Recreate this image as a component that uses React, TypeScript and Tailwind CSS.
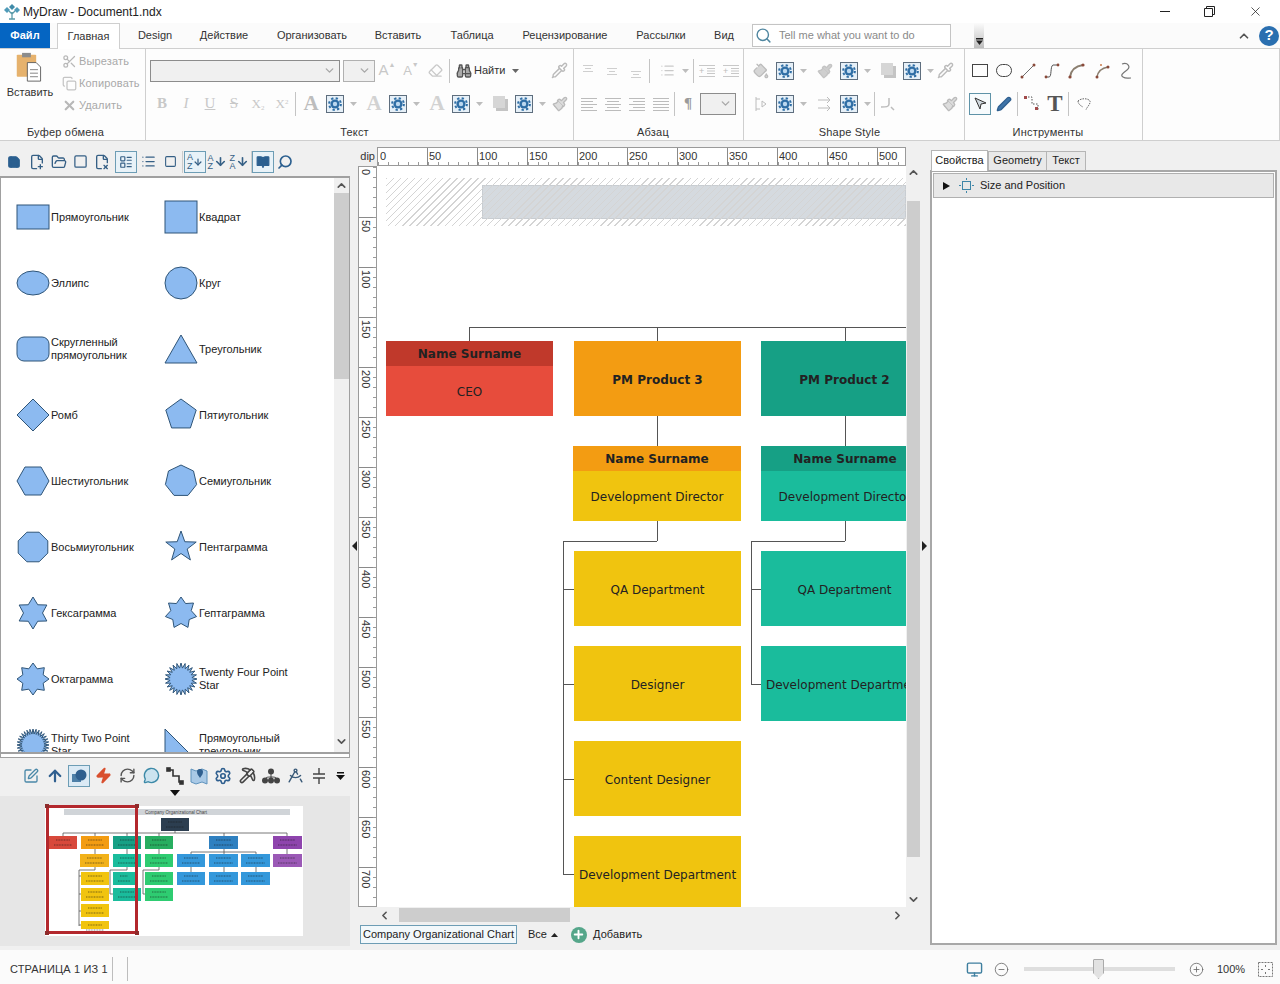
import React from 'react';
import {
  Scissors, Copy, X, Binoculars, Pipette, Paintbrush, PaintBucket, ChevronDown, ChevronUp, ChevronLeft, ChevronRight,
  Search, FilePlus2, FolderOpen, FileX2, LayoutList, List, Square, BookOpen, SquarePen, ArrowUp, Zap, RefreshCw, MessageCircle,
  Settings, Pickaxe, DraftingCompass, Monitor, CircleMinus, CirclePlus, Pen, Eraser, Save, ArrowDown, Plus,
} from 'lucide-react';

const D = '#c9c9c9';

function Cell({ className = 'w-[24px]', children }: { className?: string; children?: React.ReactNode }) {
  return <div className={`${className} h-[24px] flex items-center justify-center shrink-0`}>{children}</div>;
}
function Sep({ className = 'mx-[1px]' }: { className?: string }) {
  return <div className={`w-px h-[24px] bg-[#c4c4c4] shrink-0 ${className}`} />;
}
function Gear() {
  return (
    <Cell>
      <div className="w-[18px] h-[18px] border border-[#5e6e7e] bg-[#e6f0f8] flex items-center justify-center">
        <svg width="14" height="14" viewBox="0 0 14 14">
          <circle cx="7" cy="7" r="5.9" fill="none" stroke="#2f6ea5" strokeWidth="2" strokeDasharray="2.3 2.33" />
          <circle cx="7" cy="7" r="4.6" fill="#2f6ea5" />
          <circle cx="7" cy="7" r="2.2" fill="#bcd8ef" />
        </svg>
      </div>
    </Cell>
  );
}
function Caret() {
  return (
    <Cell className="w-[12px]">
      <svg width="7" height="4"><path d="M0 0h7L3.5 4z" fill="#bdbdbd" /></svg>
    </Cell>
  );
}
function Chev() {
  return <ChevronDown size={13} stroke="#a8a8a8" strokeWidth={2.5} />;
}
function Txt({ c, children }: { c: string; children: React.ReactNode }) {
  return <span className={c}>{children}</span>;
}
function Lines({ kind }: { kind: string }) {
  const l: Record<string, number[][]> = {
    left: [[2, 16], [2, 12], [2, 16], [2, 12], [2, 16]],
    center: [[2, 16], [4, 12], [2, 16], [4, 12], [2, 16]],
    right: [[2, 16], [6, 12], [2, 16], [6, 12], [2, 16]],
    just: [[2, 16], [2, 16], [2, 16], [2, 16], [2, 16]],
  };
  return (
    <Cell>
      <svg width="18" height="14">
        {l[kind].map(([x, w], i) => (
          <rect key={i} x={x - 1} y={1 + i * 3} width={w} height="1" fill="#bcbcbc" />
        ))}
      </svg>
    </Cell>
  );
}
function ParaTop({ y }: { y: number }) {
  return (
    <Cell>
      <svg width="14" height="14">
        <rect x="1" y={y} width="10" height="1" fill="#cfcfcf" />
        <rect x="3" y={y + 3} width="6" height="1" fill="#cfcfcf" />
        <rect x="1" y={y + 6} width="10" height="1" fill="#cfcfcf" />
      </svg>
    </Cell>
  );
}
function Indent({ sign }: { sign: string }) {
  return (
    <Cell>
      <svg width="16" height="14">
        <rect x="0" y="1" width="16" height="1" fill="#c8c8c8" />
        <rect x="0" y="12" width="16" height="1" fill="#c8c8c8" />
        <rect x="8" y="4" width="8" height="1" fill="#c8c8c8" />
        <rect x="8" y="6.5" width="8" height="1" fill="#c8c8c8" />
        <rect x="8" y="9" width="8" height="1" fill="#c8c8c8" />
        <text x="0" y="10" fontSize="9" fill="#bcbcbc">{sign}</text>
      </svg>
    </Cell>
  );
}
function Shadow() {
  return (
    <Cell>
      <svg width="17" height="17">
        <rect x="4" y="4" width="12" height="12" fill="#c4c4c4" />
        <rect x="1" y="1" width="12" height="12" fill="#d6d6d6" />
      </svg>
    </Cell>
  );
}
function BigA({ outline }: { outline?: boolean }) {
  return (
    <Cell>
      <span className={outline ? "text-[21px] font-bold font-['Liberation_Serif',serif] leading-none text-[#d2d2d2]" : "text-[21px] font-bold font-['Liberation_Serif',serif] leading-none text-[#bdbdbd]"}>A</span>
    </Cell>
  );
}
function Group({ className, label, row1, row2 }: { className: string; label: string; row1: React.ReactNode; row2: React.ReactNode }) {
  return (
    <div className={`${className} shrink-0 h-full border-r border-[#cfcfcf] flex flex-col`}>
      <div className="h-[10px]" />
      <div className="h-[24px] flex items-center">{row1}</div>
      <div className="h-[9px]" />
      <div className="h-[24px] flex items-center">{row2}</div>
      <div className="flex-1 flex items-center justify-center text-[11px] text-[#333] pt-[8px] pr-[14px] tracking-[0.2px]">{label}</div>
    </div>
  );
}

function ClipBoardIcon() {
  return (
    <svg width="30" height="30" viewBox="0 0 34 34">
      <rect x="2" y="3" width="22" height="25" rx="1" fill="#e6b26d" />
      <rect x="8" y="1" width="10" height="5" fill="#8c8c8c" />
      <path d="M14 12h10l5 5v16H14z" fill="#fff" stroke="#555" />
      <path d="M17 20h9M17 24h9M17 28h9" stroke="#777" />
    </svg>
  );
}

function Ribbon() {
  return (
    <div className="h-[93px] flex border-y border-[#cfcfcf] bg-[#fdfdfd] border-r">
      <div className="w-[146px] shrink-0 h-full border-r border-[#cfcfcf] flex flex-col">
        <div className="h-[78px] flex">
          <div className="w-[60px] flex flex-col items-center pt-[3px]">
            <ClipBoardIcon />
            <div className="text-[11px] text-[#333] mt-[2px]">Вставить</div>
          </div>
          <div className="flex flex-col text-[11px] text-[#a9a9a9] pt-[1px] ml-[2px] tracking-[0.15px]">
            <div className="h-[22px] flex items-center gap-[2px]"><Scissors size={15} stroke="#b8b8b8" />Вырезать</div>
            <div className="h-[22px] flex items-center gap-[2px]"><Copy size={15} stroke="#c4c4c4" />Копировать</div>
            <div className="h-[22px] flex items-center gap-[2px]"><X size={15} stroke="#b8b8b8" strokeWidth={3.5} />Удалить</div>
          </div>
        </div>
        <div className="flex-1 flex items-center justify-center text-[11px] text-[#333] pr-[14px] tracking-[0.2px]">Буфер обмена</div>
      </div>

      <Group
        className="w-[428px] pl-[4px]"
        label="Текст"
        row1={
          <>
            <div className="w-[190px] h-[22px] border border-[#8c8c8c] bg-[#f0f0f0] flex items-center justify-end pr-[3px]"><Chev /></div>
            <div className="w-[32px] h-[22px] ml-[3px] border border-[#b0b0b0] bg-[#f0f0f0] flex items-center justify-end pr-[3px]"><Chev /></div>
            <Cell><span className="text-[15px] text-[#c8c8c8]">A</span><span className="text-[7px] text-[#c8c8c8] -mt-[10px]">▲</span></Cell>
            <Cell><span className="text-[13px] text-[#c8c8c8]">A</span><span className="text-[7px] text-[#c8c8c8] -mt-[10px]">▼</span></Cell>
            <Cell className="w-[25px]"><Eraser size={15} stroke={D} /></Cell>
            <Sep />
            <div className="w-[98px] flex items-center text-[11px] text-[#333] pl-[5px] shrink-0">
              <Binoculars size={16} stroke="#555" fill="#aaa" />
              <span className="ml-[2px]">Найти</span>
              <svg className="ml-[7px]" width="7" height="4"><path d="M0 0h7L3.5 4z" fill="#666" /></svg>
            </div>
            <Cell className="w-[20px]"><Pipette size={17} stroke="#bbb" /></Cell>
          </>
        }
        row2={
          <>
            <Cell><Txt c="font-['Liberation_Serif',serif] font-bold text-[15px] text-[#c8c8c8]">B</Txt></Cell>
            <Cell><Txt c="font-['Liberation_Serif',serif] italic text-[15px] text-[#c8c8c8]">I</Txt></Cell>
            <Cell><Txt c="font-['Liberation_Serif',serif] underline text-[15px] text-[#c8c8c8]">U</Txt></Cell>
            <Cell><Txt c="font-['Liberation_Serif',serif] line-through text-[15px] text-[#c8c8c8]">S</Txt></Cell>
            <Cell><Txt c="font-['Liberation_Serif',serif] text-[13px] text-[#c8c8c8]">X<sub className="text-[7px]">2</sub></Txt></Cell>
            <Cell><Txt c="font-['Liberation_Serif',serif] text-[13px] text-[#c8c8c8]">X<sup className="text-[7px]">2</sup></Txt></Cell>
            <Sep className="mx-[1px]" />
            <div className="w-[2px]" />
            <BigA /><Gear /><Caret />
            <div className="w-[3px]" />
            <BigA outline /><Gear /><Caret />
            <div className="w-[3px]" />
            <BigA outline /><Gear /><Caret />
            <div className="w-[3px]" />
            <Shadow /><Gear /><Caret />
            <Cell><Paintbrush size={16} stroke="#bbb" fill="#ddd" /></Cell>
          </>
        }
      />

      <Group
        className="w-[170px] pl-[3px]"
        label="Абзац"
        row1={
          <>
            <ParaTop y={1} /><ParaTop y={4} /><ParaTop y={7} />
            <Sep className="ml-[0px]" />
            <div className="w-[5px]" />
            <Cell><List size={15} stroke={D} /></Cell>
            <Caret />
            <Sep className="ml-[2px]" />
            <div className="w-[1px]" />
            <Indent sign="+" /><Indent sign="+" />
          </>
        }
        row2={
          <>
            <Lines kind="left" /><Lines kind="center" /><Lines kind="right" /><Lines kind="just" />
            <Sep className="mx-[1px]" />
            <Cell className="w-[24px]"><span className="text-[15px] font-bold text-[#9a9a9a] font-['Liberation_Serif',serif]">¶</span></Cell>
            <div className="w-[36px] h-[22px] border border-[#8c8c8c] bg-[#f0f0f0] flex items-center justify-end pr-[3px]"><Chev /></div>
          </>
        }
      />

      <Group
        className="w-[221px] pl-[5px]"
        label="Shape Style"
        row1={
          <>
            <Cell><PaintBucket size={16} stroke="#bcbcbc" fill="#d6d6d6" /></Cell><Gear /><Caret />
            <div className="w-[4px]" />
            <Cell><Paintbrush size={16} stroke="#c4c4c4" fill="#cfcfcf" /></Cell><Gear /><Caret />
            <div className="w-[3px]" />
            <Shadow /><Gear /><Caret />
            <Cell className="w-[18px]"><Pipette size={17} stroke="#bbb" /></Cell>
          </>
        }
        row2={
          <>
            <Cell>
              <svg width="16" height="16" fill="none" stroke="#bcbcbc"><path d="M3 1v14M3 3h4M3 13h4M9 5l4 3-4 3z" /></svg>
            </Cell>
            <Gear /><Caret />
            <div className="w-[4px]" />
            <Cell>
              <svg width="16" height="16" fill="none" stroke="#bcbcbc"><path d="M1 4h12M10 1l3 3-3 3M1 12h12M10 9l3 3-3 3" /></svg>
            </Cell>
            <Gear /><Caret />
            <Sep className="mx-[1px]" />
            <Cell>
              <svg width="16" height="16" fill="none" stroke="#bcbcbc" strokeWidth="1.5"><path d="M9 2v6c0 3-3 3-8 3" /><path d="M11 11l3 3" /></svg>
            </Cell>
            <div className="w-[38px]" />
            <Cell><Paintbrush size={16} stroke="#bbb" fill="#ddd" /></Cell>
          </>
        }
      />

      <Group
        className="w-[178px] pl-[3px]"
        label="Инструменты"
        row1={
          <>
            <Cell><div className="w-[16px] h-[13px] border border-[#444]" /></Cell>
            <Cell><div className="w-[16px] h-[13px] border border-[#444] rounded-full" /></Cell>
            <Cell><svg width="16" height="16" fill="none"><path d="M2 14L14 2" stroke="#6d6d6d" /><circle cx="2" cy="14" r="1.5" fill="#8a4a3a" /><circle cx="14" cy="2" r="1.5" fill="#8a4a3a" /></svg></Cell>
            <Cell><svg width="16" height="16" fill="none"><path d="M2 14h3c3 0 1-11 4-12h4" stroke="#555" /><circle cx="2" cy="14" r="1.4" fill="#8a4a3a" /><circle cx="14" cy="2" r="1.4" fill="#8a4a3a" /></svg></Cell>
            <Cell className="w-[25px]"><svg width="18" height="16" fill="none"><path d="M2 14C3 7 8 3 15 2" stroke="#8b7f70" strokeWidth="2" /><circle cx="2" cy="14" r="1.6" fill="#8a4a3a" /><circle cx="15" cy="2" r="1.6" fill="#8a4a3a" /></svg></Cell>
            <Cell className="w-[25px]"><svg width="18" height="16" fill="none"><path d="M4 14C5 8 9 5 15 4" stroke="#8b7f70" strokeWidth="1.5" /><circle cx="4" cy="14" r="1.5" fill="#8a4a3a" /><circle cx="15" cy="4" r="1.5" fill="#8a4a3a" /><circle cx="8" cy="2" r="1" fill="#c87a4a" /></svg></Cell>
            <Cell><svg width="14" height="18" fill="none"><path d="M3 2c6-2 9 3 5 6S1 13 4 15s5 1 8 1" stroke="#777" strokeWidth="1.2" /></svg></Cell>
          </>
        }
        row2={
          <>
            <Cell>
              <div className="w-[22px] h-[22px] border border-[#5f93a8] bg-[#f7fbfd] flex items-center justify-center">
                <svg width="15" height="15"><path d="M2 2l11 5-5 1-1 5z" fill="#cfd8de" stroke="#333" /></svg>
              </div>
            </Cell>
            <Cell><Pen size={16} fill="#3f74a8" stroke="#2f5f8f" /></Cell>
            <Sep className="mx-[1px]" />
            <Cell><svg width="17" height="17" fill="none"><path d="M2 2h7v7h6v6" stroke="#555" strokeDasharray="1.5 1.5" /><rect x="1" y="1" width="3" height="3" fill="#a14a4a" /><rect x="12" y="12" width="3" height="3" fill="#a14a4a" /></svg></Cell>
            <Cell><span className="font-['Liberation_Serif',serif] font-bold text-[23px] text-[#555] leading-none">T</span></Cell>
            <Sep className="mx-[1px]" />
            <Cell className="w-[28px]"><svg width="16" height="14" fill="none"><path d="M2 4c3-3 10-3 12 0 1 3-4 7-4 9M2 4c0 3 3 5 5 6" stroke="#666" strokeDasharray="1.5 1" /></svg></Cell>
          </>
        }
      />
      <div className="flex-1" />
    </div>
  );
}

function Ngon({ n, rot = -90, r = 16 }: { n: number; rot?: number; r?: number }) {
  const pts = Array.from({ length: n }, (_, i) => {
    const a = ((rot + (i * 360) / n) * Math.PI) / 180;
    return `${17 + r * Math.cos(a)},${17 + r * Math.sin(a)}`;
  }).join(' ');
  return <polygon points={pts} />;
}
function Star({ n, inner }: { n: number; inner: number }) {
  const pts = Array.from({ length: n * 2 }, (_, i) => {
    const a = ((-90 + (i * 180) / n) * Math.PI) / 180;
    const r = i % 2 ? inner : 16;
    return `${17 + r * Math.cos(a)},${17 + r * Math.sin(a)}`;
  }).join(' ');
  return <polygon points={pts} />;
}

const shapes: [string, React.ReactNode][] = [
  ['Прямоугольник', <rect x="1" y="5" width="32" height="24" />],
  ['Квадрат', <rect x="1" y="1" width="32" height="32" />],
  ['Эллипс', <ellipse cx="17" cy="17" rx="16" ry="12" />],
  ['Круг', <circle cx="17" cy="17" r="16" />],
  ['Скругленный прямоугольник', <rect x="1" y="5" width="32" height="24" rx="7" />],
  ['Треугольник', <polygon points="17,3 33,31 1,31" />],
  ['Ромб', <polygon points="17,1 33,17 17,33 1,17" />],
  ['Пятиугольник', <Ngon n={5} />],
  ['Шестиугольник', <polygon points="9,3 25,3 33,17 25,31 9,31 1,17" />],
  ['Семиугольник', <Ngon n={7} />],
  ['Восьмиугольник', <Ngon n={8} rot={-67.5} />],
  ['Пентаграмма', <Star n={5} inner={6.5} />],
  ['Гексаграмма', <Star n={6} inner={9.5} />],
  ['Гептаграмма', <Star n={7} inner={10.5} />],
  ['Октаграмма', <Star n={8} inner={11} />],
  ['Twenty Four Point Star', <Star n={24} inner={11} />],
  ['Thirty Two Point Star', <Star n={32} inner={11} />],
  ['Прямоугольный треугольник', <polygon points="1,1 33,33 1,33" />],
];

function ShapeList() {
  return (
    <div className="h-[578px] flex bg-white border-x border-y-2 border-[#a0a0a0] overflow-hidden shrink-0">
      <div className="flex-1 pl-[15px] pt-[6px] overflow-hidden">
        <div className="grid grid-cols-[148px_148px]">
          {shapes.map(([name, el]) => (
            <div key={name} className="h-[66px] flex items-center gap-[1px]">
              <svg width="34" height="34" viewBox="0 0 34 34" fill="#8cbaf0" stroke="#2f5578" strokeWidth="1" className="shrink-0">
                {el}
              </svg>
              <div className="text-[11px] leading-[13px] text-[#222] w-[100px]">{name}</div>
            </div>
          ))}
        </div>
      </div>
      <div className="w-[15px] bg-[#f0f0f0] flex flex-col items-center justify-between shrink-0">
        <div className="flex flex-col items-center w-full">
          <ChevronUp size={13} stroke="#555" strokeWidth={3} className="my-[1px]" />
          <div className="w-full h-[186px] bg-[#cdcdcd]" />
        </div>
        <ChevronDown size={13} stroke="#555" strokeWidth={3} className="mb-[4px]" />
      </div>
    </div>
  );
}

function TopToolbar() {
  const T = 'w-[22px] flex items-center justify-center text-[9px] leading-[8px] text-[#355f85]';
  return (
    <div className="h-[29px] flex items-center pl-[5px] shrink-0">
      <div className="w-[18px] flex justify-center"><Save size={14} stroke="#2b5f8f" fill="#2b5f8f" /></div>
      <div className="w-[3px]" />
      <div className="w-[22px] flex justify-center"><FilePlus2 size={16} stroke="#355f85" /></div>
      <div className="w-[21px] flex justify-center"><FolderOpen size={16} stroke="#355f85" /></div>
      <div className="w-[22px] flex justify-center"><Square size={15} stroke="#355f85" /></div>
      <div className="w-[21px] flex justify-center"><FileX2 size={16} stroke="#355f85" /></div>
      <div className="w-[22px] h-[22px] ml-[3px] border border-[#6d9db5] bg-[#e8f2f8] flex items-center justify-center"><LayoutList size={14} stroke="#355f85" /></div>
      <div className="w-[22px] flex justify-center"><List size={15} stroke="#355f85" /></div>
      <div className="w-[22px] flex justify-center"><Square size={13} stroke="#355f85" /></div>
      <div className="w-[1px] h-[22px] bg-[#ccc] ml-[1px]" />
      <div className="w-[22px] h-[22px] border border-[#6d9db5] bg-[#e8f2f8] flex items-center justify-center text-[9px] leading-[9px] text-[#355f85] ml-[1px]"><span>A<br />Z</span><ArrowDown size={10} stroke="#355f85" strokeWidth={3} /></div>
      <div className={T}><span>A<br />Z</span><ArrowDown size={13} stroke="#355f85" strokeWidth={3} /></div>
      <div className={T}><span>Z<br />A</span><ArrowDown size={13} stroke="#355f85" strokeWidth={3} /></div>
      <div className="w-[1px] h-[22px] bg-[#ccc] ml-[1px]" />
      <div className="w-[22px] h-[22px] border border-[#6d9db5] bg-[#e8f2f8] flex items-center justify-center"><BookOpen size={14} stroke="#2b5f8f" fill="#2b5f8f" /></div>
      <div className="w-[22px] flex justify-center"><Search size={16} stroke="#2b5f8f" strokeWidth={2.5} className="-scale-x-100" /></div>
    </div>
  );
}

function BottomToolbar() {
  const I = 'w-[24px] flex justify-center shrink-0';
  return (
    <div className="h-[34px] flex items-center pl-[18px] relative shrink-0 pt-[1px]">
      <div className="w-[25px] flex justify-center shrink-0"><SquarePen size={16} stroke="#4a88a8" /></div>
      <div className={I}><ArrowUp size={18} stroke="#2f5f8f" strokeWidth={3} /></div>
      <div className="w-[22px] h-[22px] border border-[#6d9db5] bg-[#dbeaf5] flex items-center justify-center shrink-0 mx-[1px]">
        <svg width="16" height="14"><rect x="1" y="5" width="9" height="8" fill="#4d7fa8" /><circle cx="10" cy="6" r="5.5" fill="#2f5f8f" /></svg>
      </div>
      <div className={I}><Zap size={17} stroke="#d9502f" fill="#d9502f" /></div>
      <div className={I}><RefreshCw size={17} stroke="#555" /></div>
      <div className={I}><MessageCircle size={17} stroke="#3d8aa8" fill="#cbe3ef" /></div>
      <div className={I}><svg width="18" height="18" fill="none" stroke="#333" strokeWidth="1.6"><path d="M2 3h5v6h6v6h3" /><rect x="1" y="1" width="3" height="3" fill="#333" /><rect x="14" y="14" width="3" height="3" fill="#333" /></svg></div>
      <div className={I}>
        <svg width="18" height="18">
          <path d="M1 2l5 2 6-2 5 2v13l-5-2-6 2-5-2z" fill="#a9c9e6" stroke="#5f93bd" />
          <path d="M10 11C8 8 7 7 7 5a3 3 0 0 1 6 0c0 2-1 3-3 6z" fill="#2f5f8f" />
        </svg>
      </div>
      <div className={I}><Settings size={18} stroke="#2f5f8f" strokeWidth={2.2} /></div>
      <div className={I}><Pickaxe size={17} stroke="#444" strokeWidth={2.2} /></div>
      <div className={I}>
        <svg width="18" height="16">
          <path d="M9 5v4M3 12c0-3 3-3 6-3s6 0 6 3M9 9v3" stroke="#444" fill="none" />
          <circle cx="9" cy="3.5" r="3" fill="#444" /><circle cx="3" cy="12.5" r="3" fill="#444" /><circle cx="9" cy="12.5" r="3" fill="#444" /><circle cx="15" cy="12.5" r="3" fill="#444" />
        </svg>
      </div>
      <div className={I}><DraftingCompass size={17} stroke="#3a5a78" /></div>
      <div className={I}><svg width="14" height="18" fill="none" stroke="#444" strokeWidth="1.4"><path d="M1 7h12M1 11h12M7 1v6M7 11v6" /></svg></div>
      <div className="w-[18px] flex justify-center"><svg width="9" height="8"><rect x="1" y="0" width="7" height="1.5" fill="#111" /><path d="M0 3h9L4.5 8z" fill="#111" /></svg></div>
    </div>
  );
}

function Thumb() {
  const rects: [number, number, number, number, string][] = [
    [161, 818, 28, 13, '#2c3e50'],
    [49, 836, 28, 13, '#d8493b'], [81, 836, 28, 13, '#f39c12'], [113, 836, 28, 13, '#16a085'], [145, 836, 28, 13, '#27ae60'], [209, 836, 29, 13, '#2f80c0'], [273, 836, 29, 13, '#8e44ad'],
    [80, 854, 29, 13, '#f2b21a'], [113, 854, 28, 13, '#1abc9c'], [145, 854, 28, 13, '#2ecc71'], [177, 854, 28, 13, '#3498db'], [209, 854, 29, 13, '#3498db'], [241, 854, 29, 13, '#3498db'], [273, 854, 29, 13, '#9b59b6'],
    [81, 872, 28, 13, '#f1c40f'], [113, 872, 22, 13, '#1abc9c'], [145, 872, 28, 13, '#2ecc71'], [177, 872, 28, 13, '#3498db'], [209, 872, 29, 13, '#3498db'], [241, 872, 29, 13, '#3498db'],
    [81, 888, 28, 13, '#f1c40f'], [113, 888, 28, 13, '#1abc9c'], [145, 888, 28, 13, '#2ecc71'],
    [81, 904, 28, 13, '#f1c40f'], [81, 921, 28, 8, '#f1c40f'],
  ];
  return (
    <div className="h-[150px] bg-[#e6e6e6] shrink-0 overflow-hidden">
      <svg width="350" height="150" viewBox="0 796 350 150">
        <rect x="45" y="806" width="258" height="130" fill="#fff" />
        <rect x="64" y="809" width="226" height="6" fill="#d0d4d8" />
        <text x="176" y="814" fontSize="4.5" textAnchor="middle" fill="#444">Company Organizational Chart</text>
        <g stroke="#555" strokeWidth="0.8" fill="none">
          <path d="M175 831v2M63 833h224M63 833v3M95 833v3M127 833v3M159 833v3M224 833v3M287 833v3M95 849v5M127 849v5M159 849v5M95 867v3H79v56M79 876h2M79 894h2M79 911h2M79 925h2M224 849v3M191 852h65M191 852v2M224 852v2M256 852v2M191 867v5M224 867v5M256 867v5M287 849v5M127 867v3h-17v24h3M159 867v3h-16v24h2" />
        </g>
        {rects.map(([x, y, w, h, c], i) => (
          <g key={i}>
            <rect x={x} y={y} width={w} height={h} fill={c} />
            <path d={`M${x + 7} ${y + 4}h${w - 14}M${x + 5} ${y + 9}h${w - 10}`} stroke="#1a1a1a" strokeDasharray="1 0.6" strokeWidth="0.7" opacity="0.8" />
          </g>
        ))}
        <rect x="47.5" y="806.5" width="89" height="126" fill="none" stroke="#b3282d" strokeWidth="3" />
        <g fill="#8d2b2b">
          <rect x="45" y="804" width="4" height="4" /><rect x="135" y="804" width="4" height="4" /><rect x="45" y="931" width="4" height="4" /><rect x="135" y="931" width="4" height="4" />
        </g>
      </svg>
    </div>
  );
}

const hLabels = ['0', '50', '100', '150', '200', '250', '300', '350', '400', '450', '500'];
const vLabels = ['0', '50', '100', '150', '200', '250', '300', '350', '400', '450', '500', '550', '600', '650', '700'];

function HRuler() {
  return (
    <div className="flex-1 h-[19px] bg-white border border-[#9a9a9a] flex overflow-hidden relative">
      {hLabels.map((l) => (
        <div key={l} className="w-[50px] first:w-[49px] shrink-0 border-l border-[#8a8a8a] first:border-l-0 pl-[1px] first:pl-[2px] pt-[1px] text-[11px] leading-[14px] text-[#333] h-full">{l}</div>
      ))}
      <div className="absolute left-0 right-0 bottom-0 h-[3px] bg-[repeating-linear-gradient(90deg,#999_0_1px,transparent_1px_10px)]" />
    </div>
  );
}
function VRuler() {
  return (
    <div className="w-[19px] bg-white border border-[#9a9a9a] flex flex-col overflow-hidden relative">
      {vLabels.map((l) => (
        <div key={l} className="h-[50px] shrink-0 border-t border-[#8a8a8a] first:border-t-0 pt-[2px]">
          <div className="w-[13px] text-[11px] leading-[13px] text-[#333] [writing-mode:vertical-rl]">{l}</div>
        </div>
      ))}
      <div className="absolute top-0 bottom-0 right-0 w-[3px] bg-[repeating-linear-gradient(180deg,#999_0_1px,transparent_1px_10px)]" />
    </div>
  );
}

const nodeText = "font-['DejaVu_Sans',sans-serif] text-[12px] text-[#222] flex items-center justify-center whitespace-nowrap";
const ln = 'absolute bg-[#555]';

function Canvas() {
  return (
    <div className="flex-1 h-full bg-white relative overflow-hidden">
      <div className="absolute left-[9px] top-[12px] w-[520px] h-[48px]">
        <div className="absolute left-[96px] top-[7px] right-0 h-[34px] bg-[#d5dadf] border border-[#c8cdd2]" />
        <div className="absolute inset-0 bg-[repeating-linear-gradient(135deg,#d4d4d4_0_1px,transparent_1px_5px)]" />
      </div>

      <div className={`${ln} left-[92px] top-[161px] w-[437px] h-px`} />
      <div className={`${ln} left-[92px] top-[161px] w-px h-[14px]`} />
      <div className={`${ln} left-[280px] top-[161px] w-px h-[14px]`} />
      <div className={`${ln} left-[468px] top-[161px] w-px h-[14px]`} />
      <div className={`${ln} left-[280px] top-[250px] w-px h-[30px]`} />
      <div className={`${ln} left-[468px] top-[250px] w-px h-[30px]`} />
      <div className={`${ln} left-[280px] top-[355px] w-px h-[20px]`} />
      <div className={`${ln} left-[468px] top-[355px] w-px h-[20px]`} />
      <div className={`${ln} left-[186px] top-[375px] w-[94px] h-px`} />
      <div className={`${ln} left-[186px] top-[375px] w-px h-[333px]`} />
      <div className={`${ln} left-[186px] top-[423px] w-[11px] h-px`} />
      <div className={`${ln} left-[186px] top-[518px] w-[11px] h-px`} />
      <div className={`${ln} left-[186px] top-[613px] w-[11px] h-px`} />
      <div className={`${ln} left-[186px] top-[708px] w-[11px] h-px`} />
      <div className={`${ln} left-[374px] top-[375px] w-[94px] h-px`} />
      <div className={`${ln} left-[374px] top-[375px] w-px h-[143px]`} />
      <div className={`${ln} left-[374px] top-[423px] w-[10px] h-px`} />
      <div className={`${ln} left-[374px] top-[518px] w-[10px] h-px`} />

      <div className="absolute left-[9px] top-[175px] w-[167px] h-[75px] bg-[#e74c3c] flex flex-col">
        <div className={`${nodeText} h-[25px] bg-[#c0392b] font-bold text-[#111]`}>Name Surname</div>
        <div className={`${nodeText} flex-1 pt-[2px]`}>CEO</div>
      </div>
      <div className={`${nodeText} pt-[2px] absolute left-[197px] top-[175px] w-[167px] h-[75px] bg-[#f39c12] font-bold text-[#111]`}>PM Product 3</div>
      <div className={`${nodeText} pt-[2px] absolute left-[384px] top-[175px] w-[167px] h-[75px] bg-[#16a085] font-bold text-[#111]`}>PM Product 2</div>

      <div className="absolute left-[196px] top-[280px] w-[168px] h-[75px] bg-[#f0c40f] flex flex-col">
        <div className={`${nodeText} h-[25px] bg-[#f39c12] font-bold text-[#111]`}>Name Surname</div>
        <div className={`${nodeText} flex-1 pt-[2px]`}>Development Director</div>
      </div>
      <div className="absolute left-[384px] top-[280px] w-[168px] h-[75px] bg-[#1abc9c] flex flex-col">
        <div className={`${nodeText} h-[25px] bg-[#16a085] font-bold text-[#111]`}>Name Surname</div>
        <div className={`${nodeText} flex-1 pt-[2px]`}>Development Director</div>
      </div>

      <div className={`${nodeText} pt-[2px] absolute left-[197px] top-[385px] w-[167px] h-[75px] bg-[#f0c40f]`}>QA Department</div>
      <div className={`${nodeText} pt-[2px] absolute left-[197px] top-[480px] w-[167px] h-[75px] bg-[#f0c40f]`}>Designer</div>
      <div className={`${nodeText} pt-[2px] absolute left-[197px] top-[575px] w-[167px] h-[75px] bg-[#f0c40f]`}>Content Designer</div>
      <div className={`${nodeText} pt-[2px] absolute left-[197px] top-[670px] w-[167px] h-[75px] bg-[#f0c40f]`}>Development Department</div>
      <div className={`${nodeText} pt-[2px] absolute left-[384px] top-[385px] w-[167px] h-[75px] bg-[#1abc9c]`}>QA Department</div>
      <div className={`${nodeText} pt-[2px] absolute left-[384px] top-[480px] w-[167px] h-[75px] bg-[#1abc9c]`}>Development Department</div>
    </div>
  );
}

export default function App() {
  return (
    <div className="w-[1280px] h-[984px] flex flex-col overflow-hidden bg-white font-['Liberation_Sans',sans-serif] text-[#222]">
      {/* title bar */}
      <div className="h-[23px] flex items-center shrink-0 bg-white">
        <div className="w-[23px] flex justify-center">
          <svg width="16" height="16" viewBox="0 0 16 16">
            <path d="M8 8v7M5 15h6M8 10L5 7M8 10l3-3" stroke="#5a9aa8" strokeWidth="1.3" fill="none" />
            <polygon points="8,0 11,3 8,6 5,3" fill="#3f8aa8" />
            <polygon points="3,3 6,6 3,9 0,6" fill="#4f9ab8" />
            <polygon points="13,3 16,6 13,9 10,6" fill="#4f9ab8" />
          </svg>
        </div>
        <div className="text-[12px] text-[#222]">MyDraw - Document1.ndx</div>
        <div className="flex-1" />
        <div className="w-[46px] flex justify-center"><div className="w-[10px] h-px bg-[#222]" /></div>
        <div className="w-[42px] flex justify-center">
          <svg width="11" height="11" fill="none" stroke="#222"><path d="M.5 2.5h8v8h-8zM2.5 2.5v-2h8v8h-2" /></svg>
        </div>
        <div className="w-[50px] flex justify-center"><X size={15} stroke="#222" strokeWidth={1.2} /></div>
      </div>

      {/* tabs */}
      <div className="h-[25px] flex items-stretch shrink-0 bg-[#fbfbfb] text-[11px] text-[#333]">
        <div className="w-[50px] bg-[#0565c2] text-white font-bold flex items-center justify-center">Файл</div>
        <div className="w-[7px]" />
        <div className="w-[63px] bg-white border-x border-t border-[#cfcfcf] flex items-center justify-center -mb-px z-10">Главная</div>
        <div className="w-[70px] flex items-center justify-center">Design</div>
        <div className="w-[68px] flex items-center justify-center">Действие</div>
        <div className="w-[108px] flex items-center justify-center">Организовать</div>
        <div className="w-[64px] flex items-center justify-center">Вставить</div>
        <div className="w-[84px] flex items-center justify-center">Таблица</div>
        <div className="w-[102px] flex items-center justify-center">Рецензирование</div>
        <div className="w-[90px] flex items-center justify-center">Рассылки</div>
        <div className="w-[36px] flex items-center justify-center">Вид</div>
        <div className="w-[199px] ml-[10px] h-[23px] mt-px border border-[#c4c4c4] bg-white flex items-center pl-[2px] text-[#8a8a8a]">
          <Search size={17} stroke="#4f86a0" />
          <span className="ml-[7px] text-[11px]">Tell me what you want to do</span>
        </div>
        <div className="w-[10px] ml-[23px] bg-[linear-gradient(#fbfbfb,#bdbdbd)] flex items-end justify-center pb-[3px]">
          <svg width="7" height="7"><rect width="7" height="1.5" fill="#222" /><path d="M0 2.5h7L3.5 7z" fill="#222" /></svg>
        </div>
        <div className="flex-1" />
        <div className="flex items-center">
          <ChevronUp size={14} stroke="#555" strokeWidth={3} />
          <div className="w-[20px] h-[20px] ml-[8px] mr-[1px] rounded-full bg-[#2a6fb0] text-white text-[15px] font-bold flex items-center justify-center">?</div>
        </div>
      </div>

      <Ribbon />

      {/* main */}
      <div className="flex-1 flex bg-[#f0f0f0] min-h-0">
        <div className="w-[350px] shrink-0 flex flex-col pt-[6px]">
          <TopToolbar />
          <ShapeList />
          <div className="h-[4px] bg-white border-x border-b border-[#a0a0a0] shrink-0" />
          <BottomToolbar />
          <div className="flex justify-center h-[7px] -mt-[2px] -mb-[1px] shrink-0"><svg width="10" height="6"><path d="M0 0h10L5 6z" fill="#111" /></svg></div>
          <Thumb />
        </div>

        <div className="w-[8px] shrink-0 flex items-center justify-center relative">
          <svg width="5" height="10"><path d="M5 0v10L0 5z" fill="#222" /></svg>
        </div>

        <div className="w-[562px] shrink-0 flex flex-col pt-[6px]">
          <div className="flex items-stretch w-[548px] h-[19px] shrink-0">
            <div className="w-[19px] text-[11px] text-[#333] leading-[19px] text-right pr-[2px]">dip</div>
            <HRuler />
          </div>
          <div className="flex h-[741px] shrink-0">
            <VRuler />
            <Canvas />
            <div className="w-[1px]" />
            <div className="w-[13px] flex flex-col items-center shrink-0 -mt-[10px]">
              <ChevronUp size={13} stroke="#555" strokeWidth={3} className="mt-[10px]" />
              <div className="w-full h-[656px] bg-[#cdcdcd] mt-[22px]" />
              <div className="flex-1" />
              <ChevronDown size={13} stroke="#555" strokeWidth={3} className="mb-[1px]" />
            </div>
          </div>
          <div className="h-[14px] flex items-center shrink-0 mt-[1px] w-[547px]">
            <div className="w-[41px] flex justify-center pl-[11px]"><ChevronLeft size={13} stroke="#555" strokeWidth={3} /></div>
            <div className="w-[171px] h-full bg-[#cdcdcd]" />
            <div className="flex-1" />
            <ChevronRight size={13} stroke="#555" strokeWidth={3} className="mr-[1px]" />
          </div>
          <div className="h-[19px] flex items-center mt-[3px] text-[11px] text-[#222] shrink-0">
            <div className="ml-[2px] h-[19px] w-[157px] border border-[#6d9db5] bg-[#f2f8fb] flex items-center justify-center whitespace-nowrap">Company Organizational Chart</div>
            <div className="ml-[11px]">Все</div>
            <svg className="ml-[4px]" width="7" height="4"><path d="M3.5 0L7 4H0z" fill="#222" /></svg>
            <div className="ml-[13px] w-[16px] h-[16px] rounded-full bg-[#55a68a] flex items-center justify-center"><Plus size={13} stroke="#fff" strokeWidth={3.5} /></div>
            <div className="ml-[6px] tracking-[0.1px]">Добавить</div>
          </div>
        </div>

        <div className="w-[8px] shrink-0 flex items-center justify-center">
          <svg width="5" height="10"><path d="M0 0v10l5-5z" fill="#222" /></svg>
        </div>

        <div className="w-[350px] shrink-0 flex flex-col pt-[8px] pl-[2px] pb-[5px]">
          <div className="flex items-end h-[21px] text-[11px] text-[#222] shrink-0 ml-[1px]">
            <div className="h-[21px] w-[57px] bg-white border-x border-t border-[#b5b5b5] flex items-center justify-center pb-[2px] -mb-px z-10">Свойства</div>
            <div className="h-[19px] w-[59px] bg-[#e9e9e9] border-x border-t border-[#b5b5b5] flex items-center justify-center pb-[2px]">Geometry</div>
            <div className="h-[19px] w-[39px] bg-[#e9e9e9] border-r border-t border-[#b5b5b5] flex items-center justify-center pb-[2px]">Текст</div>
          </div>
          <div className="flex-1 w-[347px] bg-white border-2 border-[#a8a8a8] p-[1px]">
            <div className="h-[25px] bg-[#e8e8e8] border border-[#b0b0b0] flex items-center text-[11px] text-[#222]">
              <svg className="ml-[9px]" width="7" height="8"><path d="M0 0l7 4-7 4z" fill="#111" /></svg>
              <svg className="ml-[8px]" width="17" height="17" fill="none" stroke="#3f86a8">
                <rect x="4.5" y="4.5" width="8" height="8" />
                <path d="M8.5 1v2M8.5 14v2M1 8.5h2M14 8.5h2" />
              </svg>
              <span className="ml-[5px]">Size and Position</span>
            </div>
          </div>
        </div>
      </div>

      {/* status bar */}
      <div className="h-[34px] shrink-0 bg-[#fbfbfb] flex items-center text-[11px] text-[#333] pt-[4px]">
        <div className="pl-[10px] w-[113px] h-[24px] flex items-center border-r border-[#bdbdbd] whitespace-nowrap tracking-[0.15px]">СТРАНИЦА 1 ИЗ 1</div>
        <div className="w-[15px] h-[24px] border-r border-[#bdbdbd]" />
        <div className="flex-1" />
        <Monitor size={17} stroke="#3f7f9f" />
        <CircleMinus size={15} stroke="#666" strokeWidth={1.3} className="ml-[11px]" />
        <div className="w-[151px] ml-[15px] h-[24px] relative flex items-center">
          <div className="w-full h-[4px] bg-[#dedede]" />
          <div className="absolute left-[69px] top-[2px] w-[11px] h-[20px] bg-[#e2e2e2] border border-[#aaa] rounded-t-[1px] [clip-path:polygon(0_0,100%_0,100%_70%,50%_100%,0_70%)]" />
        </div>
        <CirclePlus size={15} stroke="#666" strokeWidth={1.3} className="ml-[14px]" />
        <div className="ml-[13px] w-[30px]">100%</div>
        <div className="ml-[11px] mr-[7px]">
          <svg width="15" height="15" fill="none" stroke="#777"><rect x=".5" y=".5" width="14" height="14" strokeDasharray="2 1" /><path d="M7.5 3v2M7.5 10v2M3 7.5h2M10 7.5h2" /></svg>
        </div>
      </div>
    </div>
  );
}
